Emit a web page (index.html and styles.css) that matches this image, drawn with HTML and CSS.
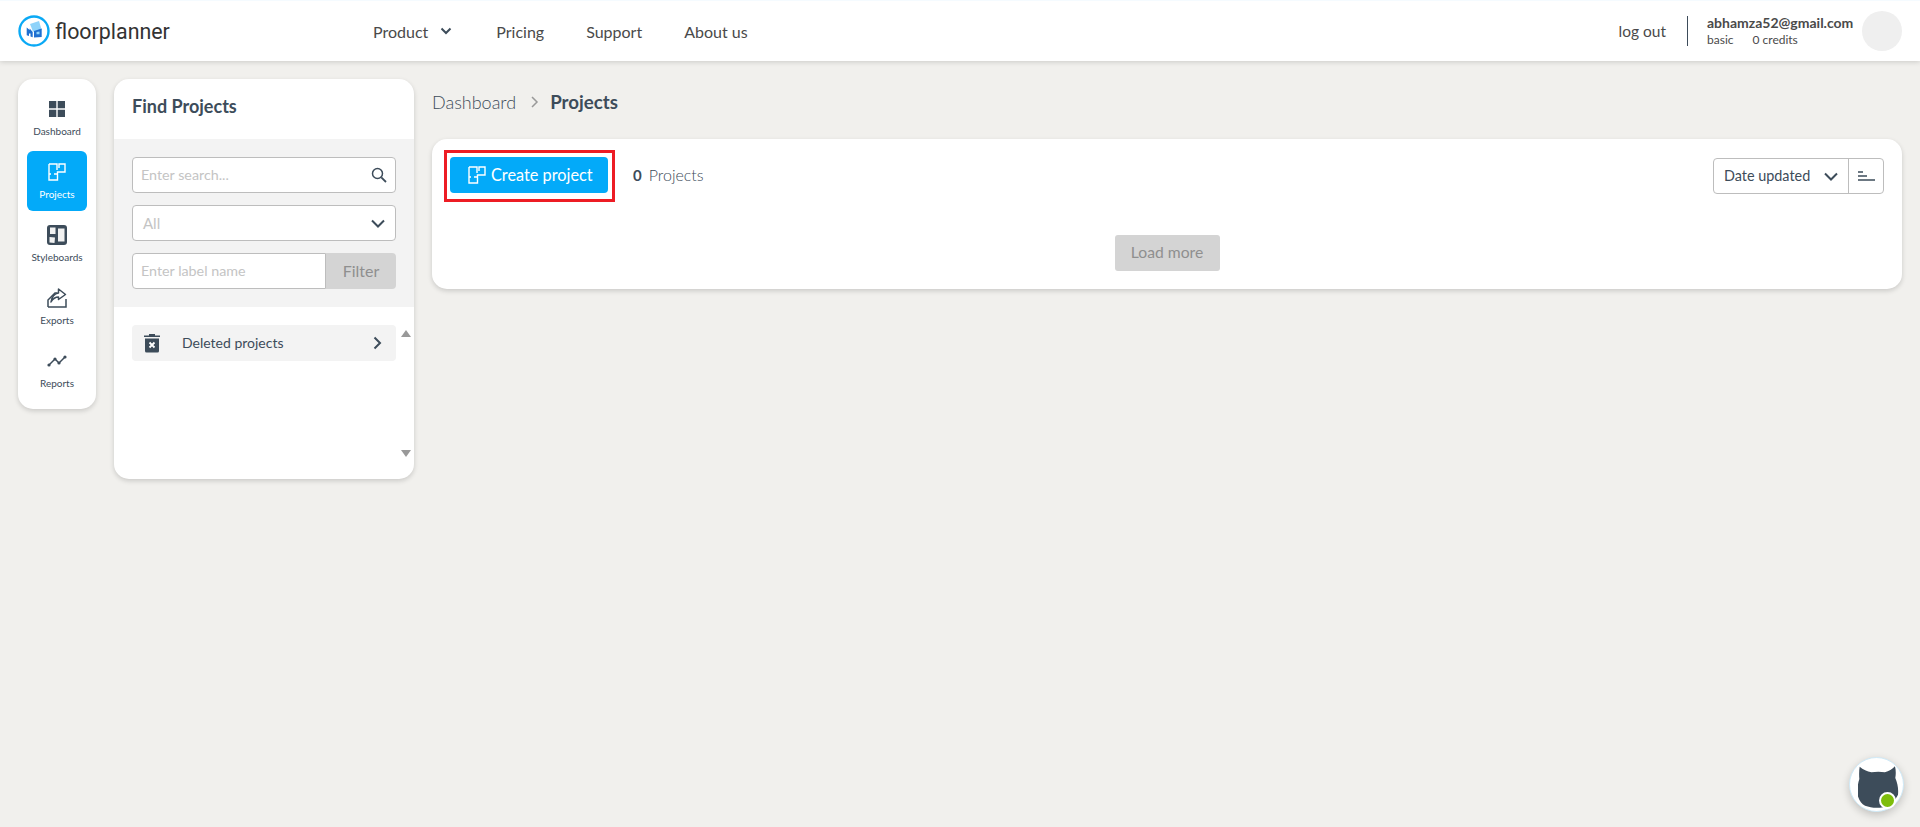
FILE: index.html
```html
<!DOCTYPE html>
<html lang="en">
<head>
<meta charset="utf-8">
<title>Floorplanner - Projects</title>
<link rel="stylesheet" href="styles.css">
</head>
<body>
<header class="topbar">
  <a class="logo">
    <svg class="logo-mark" viewBox="0 0 32 32" width="32" height="32"><circle cx="16" cy="16" r="14.5" fill="#fff" stroke="#0aa9f5" stroke-width="2.400"/><path d="M12 9l9-3 2.700 9-8.700 1.700z" fill="#8fd3fa"/><path d="M8.700 12.500l3 2.500v-1.500l3 3.500v5.200l-2.200-.7v-3l-1.500 0v2.500l-2.300-.7zM16 16l7.700-2.500v8.500L16 22.500z" fill="#1f6fd0"/><path d="M18.500 17l3-.6v2.800h-3z" fill="#8fd3fa"/></svg>
    <span class="logo-text">floorplanner</span>
  </a>
  <nav class="mainnav">
    <a class="nav-link nav-product">Product<svg class="nav-caret" viewBox="0 0 12 8" width="12" height="8"><path d="M1.500 1.500L6 6l4.500-4.500" fill="none" stroke="#3d4c5a" stroke-width="2"/></svg></a>
    <a class="nav-link">Pricing</a>
    <a class="nav-link">Support</a>
    <a class="nav-link">About us</a>
  </nav>
  <div class="account">
    <a class="logout">log out</a>
    <span class="account-rule"></span>
    <div class="account-info">
      <div class="account-mail">abhamza52@gmail.com</div>
      <div class="account-meta"><span>basic</span><span>0 credits</span></div>
    </div>
    <span class="avatar"></span>
  </div>
</header>
<div class="page">
  <aside class="sidebar">
    <a class="side-item">
      <svg viewBox="0 0 16 16" width="16" height="16"><path d="M0 0h7.300v7.300H0zM8.700 0H16v7.300H8.700zM0 8.700h7.300V16H0zM8.700 8.700H16V16H8.700z" fill="#3d4c5a"/></svg>
      <span>Dashboard</span>
    </a>
    <a class="side-item side-item-active">
      <svg class="icon-plan" viewBox="0 0 18 18" width="18" height="18"><path d="M1 1h8v6M11 5V1h6v8H9.500v8H1V1M1 11h2M6 11h3.500" fill="none" stroke="#fff" stroke-width="1.400"/></svg>
      <span>Projects</span>
    </a>
    <a class="side-item side-item-tall">
      <svg viewBox="0 0 20 20" width="20" height="20"><rect width="20" height="20" rx="3" fill="#3d4c5a"/><path d="M3 2.500h5.500V9H3zM11 3.500h6.500v13H11zM2.500 12l5.500.5-.5 5.500-5-.5z" fill="#f1f1f1"/></svg>
      <span>Styleboards</span>
    </a>
    <a class="side-item side-item-tall">
      <svg viewBox="0 0 20 20" width="20" height="20"><path d="M1 19h18v-8M1 19v-7l7-7h2.500" fill="none" stroke="#3d4c5a" stroke-width="1.500"/><path d="M11.500 1l7 5.500-7 5V9C8 9 6 10.500 4 14c.8-5 3-8.500 7.500-9z" fill="#fff" stroke="#3d4c5a" stroke-width="1.500" stroke-linejoin="round"/></svg>
      <span>Exports</span>
    </a>
    <a class="side-item side-item-short">
      <svg viewBox="0 0 20 12" width="20" height="12"><path d="M2 10l6-6 4 4 6-6" fill="none" stroke="#3d4c5a" stroke-width="1.500"/><circle cx="2" cy="10" r="1.600" fill="#3d4c5a"/><circle cx="8" cy="4" r="1.600" fill="#3d4c5a"/><circle cx="12" cy="8" r="1.600" fill="#3d4c5a"/><circle cx="18" cy="2" r="1.600" fill="#3d4c5a"/></svg>
      <span>Reports</span>
    </a>
  </aside>
  <section class="finder">
    <h2 class="finder-title">Find Projects</h2>
    <div class="finder-filters">
      <div class="field">
        <span class="placeholder">Enter search...</span>
        <svg viewBox="0 0 16 16" width="16" height="16"><circle cx="6.500" cy="6.500" r="5" fill="none" stroke="#3d4c5a" stroke-width="1.500"/><path d="M10.300 10.300L15 15" stroke="#3d4c5a" stroke-width="1.800"/></svg>
      </div>
      <div class="field field-select">
        <span class="placeholder placeholder-all">All</span>
        <svg viewBox="0 0 14 9" width="14" height="9"><path d="M1 1.500l6 6 6-6" fill="none" stroke="#3d4c5a" stroke-width="2"/></svg>
      </div>
      <div class="label-filter">
        <div class="label-input"><span class="placeholder">Enter label name</span></div>
        <div class="label-button">Filter</div>
      </div>
    </div>
    <div class="finder-list">
      <div class="deleted-row">
        <svg class="trash" viewBox="0 0 16 20" width="16" height="20"><path d="M0 2.500h16v1.500H0zM5 1h6v2H5z" fill="#3d4c5a"/><path d="M1 5.500h14V18a1.500 1.500 0 0 1-1.500 1.500h-11A1.500 1.500 0 0 1 1 18z" fill="#3d4c5a"/><path d="M5.500 9.500l5 5M10.500 9.500l-5 5" stroke="#fff" stroke-width="1.800"/></svg>
        <span class="deleted-label">Deleted projects</span>
        <svg viewBox="0 0 9 14" width="9" height="14"><path d="M1.500 1.500L7 7l-5.500 5.500" fill="none" stroke="#3d4c5a" stroke-width="2"/></svg>
      </div>
      <div class="scrollbar">
        <span class="arrow arrow-up"></span>
        <span class="arrow arrow-down"></span>
      </div>
    </div>
  </section>
  <main class="content">
    <div class="crumbs">
      <span class="crumb">Dashboard</span>
      <svg class="crumb-sep" viewBox="0 0 8 12" width="8" height="12"><path d="M1 1l5 5-5 5" fill="none" stroke="#999" stroke-width="1.500"/></svg>
      <strong class="crumb-current">Projects</strong>
    </div>
    <div class="card">
      <div class="card-top">
        <div class="highlight">
          <a class="create">
            <svg viewBox="0 0 18 18" width="18" height="18"><path d="M1 1h8v6M11 5V1h6v8H9.500v8H1V1M1 11h2M6 11h3.500" fill="none" stroke="#fff" stroke-width="1.400"/></svg>
            <span class="create-label">Create project</span>
          </a>
        </div>
        <div class="count"><b>0</b><span>Projects</span></div>
        <div class="sorter">
          <div class="sort-select"><span class="sort-label">Date updated</span><svg viewBox="0 0 14 9" width="14" height="9"><path d="M1 1.500l6 6 6-6" fill="none" stroke="#3d4c5a" stroke-width="2"/></svg></div>
          <div class="sort-order"><svg viewBox="0 0 17 10" width="17" height="10"><path d="M0 1h5M0 5h9M0 9h17" stroke="#3d4c5a" stroke-width="1.500"/></svg></div>
        </div>
      </div>
      <div class="card-foot"><a class="load-more">Load more</a></div>
    </div>
  </main>
</div>
<a class="chat">
  <svg class="chat-cat" viewBox="85 55 122 130" width="41" height="44"><path d="M90 60c10 8 22 14 35 16 13-2 28-2 40 0 12-3 22-10 30-18 3 12 3 24 1 35 6 14 10 30 8 50-8 16-20 28-44 37-18 4-38 2-54-4-10-6-16-14-21-28-2-14-2-36 4-52-1-12-1-24 1-36z" fill="#3d4c5a"/></svg>
  <span class="chat-dot"></span>
</a>
</body>
</html>
```
FILE: styles.css
```css
* { box-sizing: border-box; }
html, body { height: 100%; }
body {
  margin: 0;
  background: #f1f0ed;
  color: #3d4c5a;
  font-family: Lato, "Liberation Sans", sans-serif;
  overflow: hidden;
}
a { color: inherit; text-decoration: none; }

.topbar {
  height: 61px;
  background: #fff;
  border-top: 1px solid #f5fbff;
  box-shadow: 0 1px 5px rgba(0, 0, 0, .16);
  display: flex;
  align-items: center;
  padding: 0 18px;
  position: relative;
}
.logo { display: flex; align-items: center; width: 355px; gap: 5px; }
.logo-text { font-family: Roboto, sans-serif; font-size: 21.400px; color: #333; }
.mainnav { display: flex; gap: 42px; font-size: 16px; color: #4a4a4a; }
.nav-link { display: flex; align-items: center; }
.nav-caret { margin-left: 12px; margin-right: 2px; }
.account { margin-left: auto; display: flex; align-items: center; }
.logout { font-size: 15.500px; color: #4a4a4a; }
.account-rule { width: 1px; height: 30px; background: #3d4c5a; margin: 0 19px 0 21px; }
.account-info { width: 155px; }
.account-mail { font-size: 14px; font-weight: 700; color: #4a4a4a; line-height: 17px; }
.account-meta { font-size: 12px; color: #4a4a4a; display: flex; gap: 19px; line-height: 17px; }
.avatar { width: 40px; height: 40px; border-radius: 50%; background: #efefef; }

.page { display: flex; align-items: flex-start; gap: 18px; padding: 18px; }

.sidebar {
  width: 78px;
  flex: none;
  background: #fff;
  border-radius: 15px;
  box-shadow: 0 2px 5px rgba(0, 0, 0, .16);
  padding: 9px;
  display: flex;
  flex-direction: column;
  gap: 3px;
}
.side-item {
  height: 60px;
  border-radius: 6px;
  display: flex;
  flex-direction: column;
  align-items: center;
  font-size: 10px;
  color: #3d4c5a;
  padding-top: 13px;
  position: relative;
}
.side-item-tall { padding-top: 11px; }
.side-item-short { padding-top: 15px; }
.side-item span { position: absolute; top: 36px; line-height: 14px; }
.side-item-active { background: #03aaf9; color: #fff; padding-top: 12px; }

.finder {
  width: 300px;
  height: 400px;
  flex: none;
  background: #fff;
  border-radius: 15px;
  box-shadow: 0 2px 5px rgba(0, 0, 0, .16);
  overflow: hidden;
}
.finder-title { margin: 0; height: 60px; padding: 14px 18px 0; font-size: 18px; font-weight: 700; line-height: 26px; color: #3d4c5a; }
.finder-filters { background: #f3f3f3; height: 168px; padding: 18px; display: flex; flex-direction: column; gap: 12px; }
.field {
  height: 36px;
  background: #fff;
  border: 1px solid #bdbdbd;
  border-radius: 4px;
  display: flex;
  align-items: center;
  justify-content: space-between;
  padding: 0 8px;
}
.field-select { padding: 0 10px; }
.placeholder { font-size: 14.300px; color: #c4c4c4; margin-top: -1px; }
.placeholder-all { font-size: 15px; margin-top: 0; }
.label-filter { display: flex; height: 36px; }
.label-input {
  flex: 1;
  background: #fff;
  border: 1px solid #bdbdbd;
  border-radius: 4px 0 0 4px;
  display: flex;
  align-items: center;
  padding: 0 8px;
}
.label-button {
  width: 70px;
  background: #d4d4d4;
  border-radius: 0 4px 4px 0;
  color: #8f8f8f;
  font-size: 16px;
  padding-bottom: 1px;
  display: flex;
  align-items: center;
  justify-content: center;
}
.finder-list { position: relative; padding: 18px 18px 0; }
.deleted-row {
  height: 36px;
  background: #f3f3f3;
  border-radius: 4px;
  display: flex;
  align-items: center;
  padding: 0 14px 0 12px;
}
.trash { flex: none; }
.deleted-label { flex: 1; margin: -2px 0 0 22px; font-size: 14px; color: #3d4c5a; }
.scrollbar { position: absolute; top: 23px; right: 3px; height: 127px; display: flex; flex-direction: column; justify-content: space-between; }
.arrow { width: 0; height: 0; border-left: 5px solid transparent; border-right: 5px solid transparent; }
.arrow-up { border-bottom: 7px solid #999; }
.arrow-down { border-top: 7px solid #999; }

.content { flex: 1; min-width: 0; }
.crumbs { height: 42px; display: flex; align-items: center; gap: 13px; padding-top: 3px; margin-bottom: 18px; }
.crumb { font-size: 18px; font-weight: 300; color: #3d4c5a; }
.crumb-sep { margin: 0 -2px 0 2px; }
.crumb-current { font-size: 18.700px; font-weight: 700; color: #3d4c5a; }
.card {
  height: 150px;
  background: #fff;
  border-radius: 15px;
  box-shadow: 0 2px 5px rgba(0, 0, 0, .16);
  padding: 11px 18px 0 12px;
}
.card-top { display: flex; align-items: center; height: 52px; }
.highlight { border: 3px solid #ed1c24; padding: 4px 3px; width: 171px; height: 52px; }
.create {
  height: 36px;
  background: #03aaf9;
  color: #fff;
  border-radius: 4px;
  font-size: 16.300px;
  display: flex;
  align-items: center;
  padding: 0 0 0 18px;
  gap: 5px;
  width: 158px;
}
.create-label { margin-top: -1px; }
.count { margin: -3px 0 0 18px; display: flex; align-items: baseline; gap: 7px; font-size: 16px; }
.count b { font-weight: 700; font-size: 15px; }
.count span { font-weight: 300; }
.sorter { margin-left: auto; display: flex; height: 36px; border: 1px solid #bdbdbd; border-radius: 4px; }
.sort-select { width: 135px; padding: 0 10px; font-size: 14.400px; display: flex; align-items: center; justify-content: space-between; border-right: 1px solid #bdbdbd; }
.sort-label { margin-top: -2px; }
.sort-order { width: 34px; display: flex; align-items: center; justify-content: center; }
.card-foot { display: flex; justify-content: center; padding-top: 33px; margin-right: -6px; }
.load-more {
  width: 105px;
  height: 36px;
  background: #d4d4d4;
  border-radius: 3px;
  color: #8f8f8f;
  font-size: 15.700px;
  padding-bottom: 2px;
  display: flex;
  align-items: center;
  justify-content: center;
}
.chat {
  position: absolute;
  left: 1849px;
  top: 757px;
  width: 55px;
  height: 55px;
  border-radius: 50%;
  background: #fff;
  border: 1px solid #cfeaf8;
  box-shadow: 0 3px 8px rgba(0, 0, 0, .2);
  display: flex;
  align-items: center;
  justify-content: center;
}
.chat-cat { margin: 5px 0 0 3px; }
.chat-dot {
  position: absolute;
  left: 29px;
  top: 34px;
  width: 17px;
  height: 17px;
  border-radius: 50%;
  background: #7ebd0b;
  border: 2.500px solid #fff;
}
```
